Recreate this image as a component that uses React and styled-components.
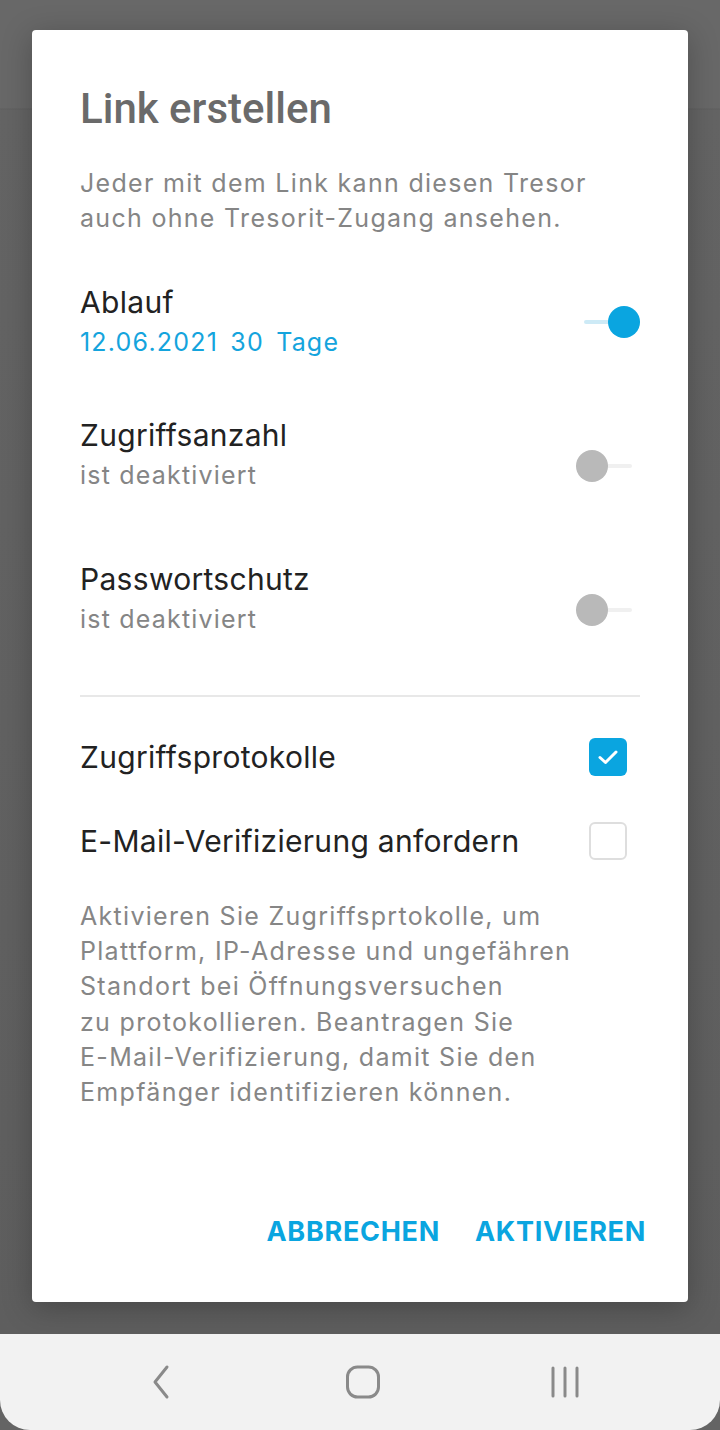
import React from "react";
import styled, { createGlobalStyle } from "styled-components";

const Global = createGlobalStyle`
  html, body { margin: 0; padding: 0; }
  body { font-family: Inter, "Open Sans", sans-serif; background: #646464; }
`;

const Page = styled.div`
  width: 720px;
  height: 1430px;
  display: flex;
  flex-direction: column;
  background: #646464;
  overflow: hidden;
`;

const Screen = styled.div`
  flex: 1;
  display: flex;
  flex-direction: column;
  align-items: center;
  padding-top: 30px;
  background: linear-gradient(#686868 0, #686868 108px, #5f5f5f 109px, #646464 110px, #5e5e5e 100%);
`;

const Dialog = styled.div`
  width: 656px;
  height: 1272px;
  box-sizing: border-box;
  background: #fff;
  border-radius: 4px;
  padding: 58px 48px 0 48px;
  display: flex;
  flex-direction: column;
  box-shadow: 0 6px 30px rgba(0, 0, 0, 0.25);
`;

const Title = styled.h1`
  margin: 0;
  font-family: Roboto, sans-serif;
  font-weight: 500;
  font-size: 42px;
  line-height: 42px;
  color: #6a6a6a;
`;

const Intro = styled.p`
  margin: 36px 0 0;
  font-size: 25px;
  line-height: 35px;
  letter-spacing: 1.3px;
  color: #858585;
`;

const Row = styled.div`
  display: flex;
  align-items: center;
  justify-content: space-between;
  margin-top: ${(p) => p.$top}px;
`;

const Labels = styled.div`
  display: flex;
  flex-direction: column;
`;

const Label = styled.div`
  font-size: 30px;
  line-height: 40px;
  color: #222;
  letter-spacing: 0.3px;
`;

const Sub = styled.div`
  font-size: 25px;
  line-height: 40px;
  letter-spacing: 1.2px;
  color: ${(p) => (p.$accent ? "#14a4dd" : "#858585")};
  word-spacing: ${(p) => (p.$accent ? "4px" : "0")};
`;

const SwitchWrap = styled.div`
  position: relative;
  width: 56px;
  height: 34px;
  margin-right: ${(p) => (p.$on ? 0 : 8)}px;
  margin-top: ${(p) => (p.$on ? 0 : 22)}px;
`;

const Track = styled.div`
  position: absolute;
  left: 0;
  right: 0;
  top: 15px;
  height: 4px;
  border-radius: 2px;
  background: ${(p) => (p.$on ? "#cdeaf6" : "#f0f0f0")};
`;

const Thumb = styled.div`
  position: absolute;
  top: 1px;
  ${(p) => (p.$on ? "right: 0;" : "left: 0;")}
  width: 32px;
  height: 32px;
  border-radius: 50%;
  background: ${(p) => (p.$on ? "#0aa5e0" : "#b9b9b9")};
`;

const Divider = styled.hr`
  border: none;
  height: 2px;
  background: #e8e8e8;
  margin: 56px 0 0;
`;

const CheckRow = styled.div`
  display: flex;
  align-items: center;
  justify-content: space-between;
  margin-top: ${(p) => p.$top}px;
`;

const Box = styled.div`
  width: 38px;
  height: 38px;
  box-sizing: border-box;
  border-radius: 6px;
  margin-right: 13px;
  display: flex;
  align-items: center;
  justify-content: center;
  background: ${(p) => (p.$checked ? "#0aa5e0" : "#fff")};
  border: ${(p) => (p.$checked ? "none" : "2px solid #dedede")};
`;

const Note = styled.p`
  margin: 38px 0 0;
  font-size: 25px;
  line-height: 35.2px;
  letter-spacing: 1.3px;
  color: #868686;
`;

const Actions = styled.div`
  margin-top: auto;
  margin-right: -6px;
  margin-bottom: 54px;
  display: flex;
  justify-content: flex-end;
  gap: 35px;
`;

const Action = styled.button`
  border: none;
  background: none;
  padding: 0;
  font-family: Inter, sans-serif;
  font-weight: 700;
  font-size: 27px;
  line-height: 33px;
  letter-spacing: 0.7px;
  color: #0aa5e0;
`;

const NavBar = styled.div`
  height: 96px;
  background: #f2f2f2;
  border-radius: 0 0 30px 30px;
  display: flex;
  align-items: center;
  justify-content: space-between;
  padding: 0 135px 0 140px;
`;

const NavIcon = styled.svg`
  width: 40px;
  height: 40px;
  fill: none;
  stroke: #8a8a8a;
  stroke-width: 3;
  stroke-linecap: round;
  stroke-linejoin: round;
`;

const Switch = ({ on }) => (
  <SwitchWrap $on={on}>
    <Track $on={on} />
    <Thumb $on={on} />
  </SwitchWrap>
);

const Check = () => (
  <svg width="22" height="18" viewBox="0 0 22 18">
    <path d="M3 9.5l5.5 5L19 4" fill="none" stroke="#fff" strokeWidth="3" strokeLinecap="round" strokeLinejoin="round" />
  </svg>
);

const App = () => (
  <Page>
    <Global />
    <Screen>
      <Dialog>
        <Title>Link erstellen</Title>
        <Intro>
          Jeder mit dem Link kann diesen Tresor
          <br />
          auch ohne Tresorit-Zugang ansehen.
        </Intro>

        <Row $top={46}>
          <Labels>
            <Label>Ablauf</Label>
            <Sub $accent>12.06.2021 30 Tage</Sub>
          </Labels>
          <Switch on />
        </Row>

        <Row $top={53}>
          <Labels>
            <Label>Zugriffsanzahl</Label>
            <Sub>ist deaktiviert</Sub>
          </Labels>
          <Switch />
        </Row>

        <Row $top={64}>
          <Labels>
            <Label>Passwortschutz</Label>
            <Sub>ist deaktiviert</Sub>
          </Labels>
          <Switch />
        </Row>

        <Divider />

        <CheckRow $top={40}>
          <Label>Zugriffsprotokolle</Label>
          <Box $checked>
            <Check />
          </Box>
        </CheckRow>

        <CheckRow $top={44}>
          <Label>E-Mail-Verifizierung anfordern</Label>
          <Box />
        </CheckRow>

        <Note>
          Aktivieren Sie Zugriffsprtokolle, um
          <br />
          Plattform, IP-Adresse und ungefähren
          <br />
          Standort bei Öffnungsversuchen
          <br />
          zu protokollieren. Beantragen Sie
          <br />
          E-Mail-Verifizierung, damit Sie den
          <br />
          Empfänger identifizieren können.
        </Note>

        <Actions>
          <Action>ABBRECHEN</Action>
          <Action>AKTIVIEREN</Action>
        </Actions>
      </Dialog>
    </Screen>
    <NavBar>
      <NavIcon viewBox="0 0 40 40">
        <path d="M27 5L15 20l12 15" />
      </NavIcon>
      <NavIcon viewBox="0 0 40 40">
        <rect x="4.5" y="5" width="31" height="30" rx="10" />
      </NavIcon>
      <NavIcon viewBox="0 0 40 40">
        <path d="M8 6v28M20 6v28M32 6v28" />
      </NavIcon>
    </NavBar>
  </Page>
);

export default App;
